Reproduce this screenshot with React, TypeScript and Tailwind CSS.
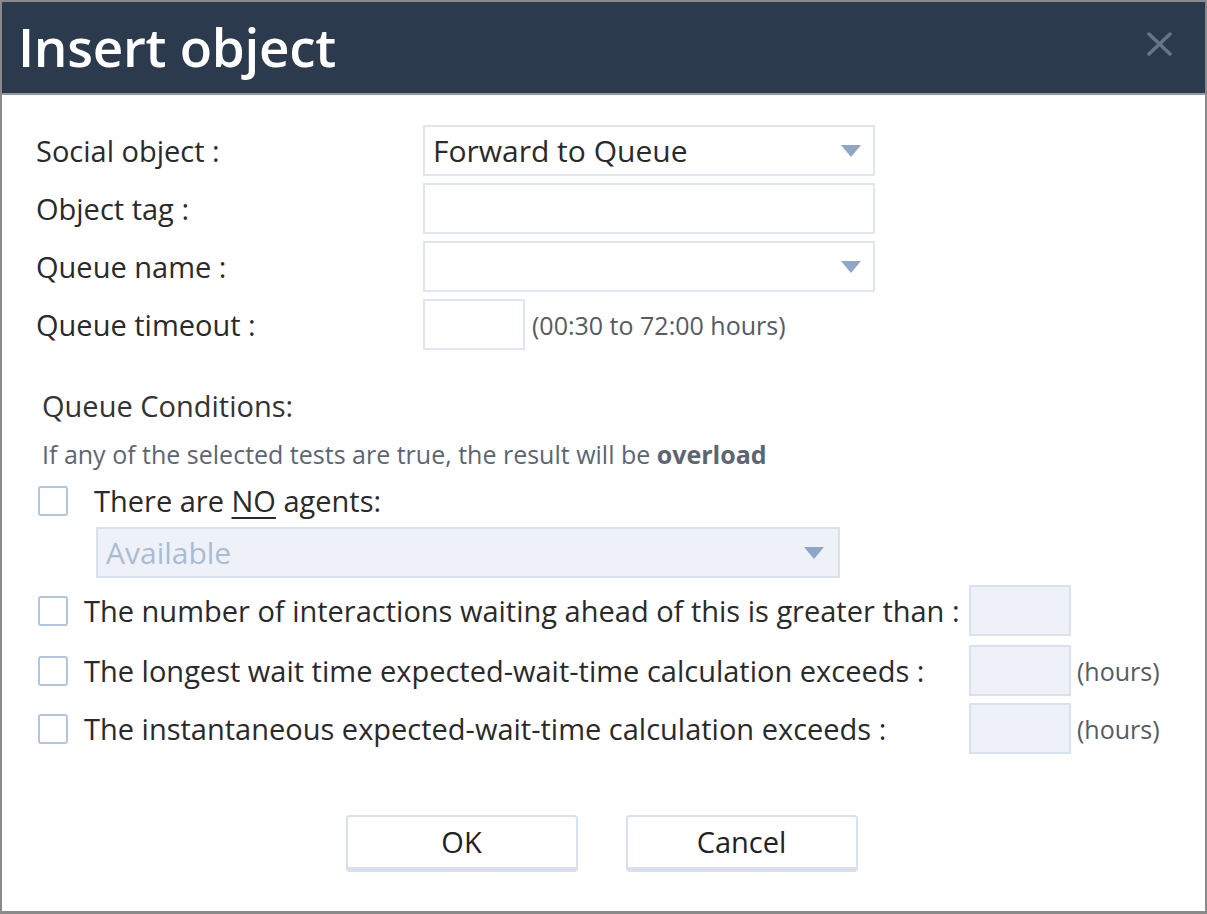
import React from "react";

const font = { fontFamily: '"Open Sans", "Noto Sans", sans-serif' };

function Arrow({ color = "#8fa6c6" }: { color?: string }) {
  return (
    <svg width="20" height="12" viewBox="0 0 20 12">
      <path d="M0 0 L20 0 L10 12 Z" fill={color} />
    </svg>
  );
}

function Checkbox() {
  return <div className="w-[30px] h-[30px] border-2 border-[#b3c6de] rounded-[3px] bg-white shrink-0" />;
}

export default function App() {
  return (
    <div
      className="w-[1207px] h-[914px] bg-white border-t-2 border-l-2 border-r-2 border-b-[3px] border-[#8a8a8a] flex flex-col text-[#2a2a2a] overflow-hidden"
      style={font}
    >
      <div className="h-[91px] bg-[#2b3a4c] flex items-center justify-between pl-[16px] pr-[33px] shrink-0">
        <div className="text-white text-[53px] font-semibold leading-none tracking-[-0.3px] mb-[2px]">Insert object</div>
        <svg width="25" height="24" viewBox="0 0 25 24" className="mb-[8px]">
          <path d="M2 2 L23 22 M23 2 L2 22" stroke="#66758a" strokeWidth="3.5" strokeLinecap="round" />
        </svg>
      </div>
      <div className="h-[2px] bg-[#8f99a6] shrink-0" />

      <div className="flex-1 flex flex-col pl-[34px] pr-[34px] pt-[30px] text-[29px] leading-[36px]">
        <div className="flex items-center h-[51px]">
          <div className="w-[387px]">Social object :</div>
          <div className="w-[452px] h-[51px] border-2 border-[#dfe6f0] flex items-center justify-between pl-[8px] pr-[12px]">
            <span className="text-[30px] text-[#2a2a2a]">Forward to Queue</span>
            <Arrow />
          </div>
        </div>
        <div className="flex items-center h-[51px] mt-[7px]">
          <div className="w-[387px]">Object tag :</div>
          <div className="w-[452px] h-[51px] border-2 border-[#dfe6f0]" />
        </div>
        <div className="flex items-center h-[51px] mt-[7px]">
          <div className="w-[387px]">Queue name :</div>
          <div className="w-[452px] h-[51px] border-2 border-[#dfe6f0] flex items-center justify-end pr-[12px]">
            <Arrow />
          </div>
        </div>
        <div className="flex items-center h-[51px] mt-[7px]">
          <div className="w-[387px]">Queue timeout :</div>
          <div className="w-[102px] h-[51px] border-2 border-[#dfe6f0]" />
          <div className="ml-[7px] text-[25px] text-[#555b63]">(00:30 to 72:00 hours)</div>
        </div>

        <div className="mt-[38px] pl-[6px] text-[29px] leading-[36px] text-[#333]">Queue Conditions:</div>
        <div className="mt-[15px] pl-[6px] text-[25px] leading-[30px] text-[#5d6670]">
          If any of the selected tests are true, the result will be <span className="font-bold">overload</span>
        </div>

        <div className="flex items-center mt-[14px] pl-[2px]">
          <Checkbox />
          <div className="ml-[26px]">
            There are <span className="underline underline-offset-[5px]">NO</span> agents:
          </div>
        </div>
        <div className="ml-[60px] mt-[8px] w-[744px] h-[51px] bg-[#eef2f8] border-2 border-[#d8e2ee] flex items-center justify-between pl-[8px] pr-[14px]">
          <span className="text-[30px] text-[#a9bcd4]">Available</span>
          <Arrow />
        </div>

        <div className="flex items-center mt-[7px] h-[51px] pl-[2px]">
          <Checkbox />
          <div className="ml-[16px] w-[885px] whitespace-nowrap">The number of interactions waiting ahead of this is greater than :</div>
          <div className="w-[102px] h-[51px] bg-[#eef2f8] border-2 border-[#d8e2ee] shrink-0" />
        </div>
        <div className="flex items-center mt-[9px] h-[51px] pl-[2px]">
          <Checkbox />
          <div className="ml-[16px] w-[885px] whitespace-nowrap">The longest wait time expected-wait-time calculation exceeds :</div>
          <div className="w-[102px] h-[51px] bg-[#eef2f8] border-2 border-[#d8e2ee] shrink-0" />
          <div className="ml-[6px] text-[25px] text-[#555b63]">(hours)</div>
        </div>
        <div className="flex items-center mt-[7px] h-[51px] pl-[2px]">
          <Checkbox />
          <div className="ml-[16px] w-[885px] whitespace-nowrap">The instantaneous expected-wait-time calculation exceeds :</div>
          <div className="w-[102px] h-[51px] bg-[#eef2f8] border-2 border-[#d8e2ee] shrink-0" />
          <div className="ml-[6px] text-[25px] text-[#555b63]">(hours)</div>
        </div>

        <div className="flex justify-center gap-[48px] mt-[61px] pr-[4px]">
          <button className="w-[232px] h-[57px] bg-white border-2 border-b-[5px] border-[#d7e0ec] rounded-[4px] text-[29px] text-[#222]">
            OK
          </button>
          <button className="w-[232px] h-[57px] bg-white border-2 border-b-[5px] border-[#d7e0ec] rounded-[4px] text-[29px] text-[#222]">
            Cancel
          </button>
        </div>
      </div>
    </div>
  );
}
